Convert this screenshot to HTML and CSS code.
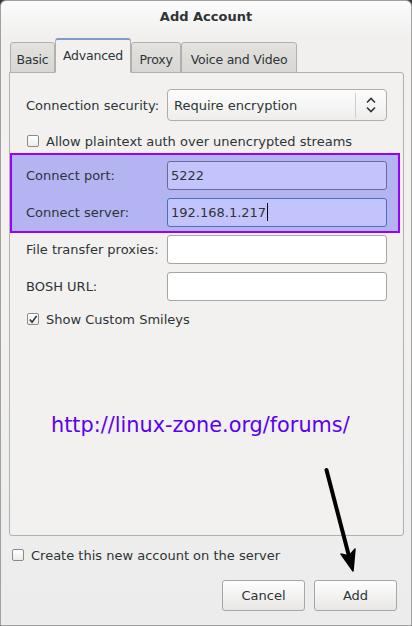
FILE: index.html
```html
<!DOCTYPE html>
<html>
<head>
<meta charset="utf-8">
<link rel="stylesheet" href="styles.css">
</head>
<body>
<div class="window">
  <div class="titlebar">Add Account</div>
  <div class="tabs">
    <div class="tab">Basic</div>
    <div class="tab active">Advanced</div>
    <div class="tab">Proxy</div>
    <div class="tab">Voice and Video</div>
  </div>
  <div class="panel">
    <div class="row row-select">
      <span class="label">Connection security:</span>
      <div class="select">
        <span class="select-text">Require encryption</span>
        <span class="select-sep"></span>
        <svg class="select-arrows" width="12" height="18" viewBox="0 0 12 18"><path d="M2 6.5 L6 2.5 L10 6.5 M2 11.5 L6 15.5 L10 11.5" fill="none" stroke="#2e3436" stroke-width="1.6"/></svg>
      </div>
    </div>
    <label class="check-row check-plain"><span class="checkbox"></span>Allow plaintext auth over unencrypted streams</label>
    <div class="highlight">
      <div class="row row-entry">
        <span class="label">Connect port:</span>
        <div class="entry entry-hl">5222</div>
      </div>
      <div class="row row-entry">
        <span class="label">Connect server:</span>
        <div class="entry entry-hl entry-focus">192.168.1.217<span class="caret"></span></div>
      </div>
    </div>
    <div class="row row-entry row-after">
      <span class="label">File transfer proxies:</span>
      <div class="entry"></div>
    </div>
    <div class="row row-entry">
      <span class="label">BOSH URL:</span>
      <div class="entry"></div>
    </div>
    <label class="check-row check-smileys"><span class="checkbox checked"><svg width="11" height="11" viewBox="0 0 11 11"><path d="M2 5.5 L4.5 8.5 L9.5 1.5" fill="none" stroke="#2e3436" stroke-width="1.8"/></svg></span>Show Custom Smileys</label>
    <div class="url">http://linux-zone.org/forums/</div>
  </div>
  <label class="check-row check-create"><span class="checkbox"></span>Create this new account on the server</label>
  <div class="buttons">
    <button class="btn">Cancel</button>
    <button class="btn">Add</button>
  </div>
  <svg class="arrow" width="412" height="626" viewBox="0 0 412 626">
    <line x1="326.5" y1="470" x2="350" y2="560" stroke="#000" stroke-width="4" stroke-linecap="round"/>
    <path d="M341 554 L353 571 L355 549 L349 556 Z" fill="#000" stroke="#000" stroke-width="1.5" stroke-linejoin="round"/>
  </svg>
</div>
</body>
</html>
```

FILE: styles.css
```css
html, body {
  margin: 0;
  padding: 0;
  background: #3a3a3a;
}
body {
  width: 412px;
  height: 626px;
  overflow: hidden;
  font-family: "DejaVu Sans", sans-serif;
  font-size: 13px;
  color: #2e3436;
}
.window {
  position: relative;
  box-sizing: border-box;
  width: 412px;
  height: 626px;
  border: 1px solid #a1a1a1;
  border-radius: 6px 6px 0 0;
  background: linear-gradient(#fbfbfb 0px, #f1f0ef 36px, #f2f1f0 300px, #ececec 626px);
  display: flex;
  flex-direction: column;
}
.titlebar {
  height: 31px;
  display: flex;
  align-items: center;
  justify-content: center;
  font-weight: bold;
  color: #2e3436;
}
.tabs {
  display: flex;
  align-items: flex-end;
  margin-left: 9px;
  height: 41px;
  position: relative;
  z-index: 1;
  margin-bottom: -1px;
}
.tab {
  box-sizing: border-box;
  height: 31px;
  padding: 9px 0 0 0;
  text-align: center;
  border: 1px solid #b2b0ad;
  border-radius: 3px 3px 0 0;
  background: linear-gradient(#e4e2df, #d8d6d2);
  color: #2e3436;
  font-size: 12.5px;
  letter-spacing: -0.2px;
  white-space: nowrap;
}
.tab:nth-child(1) { width: 45px; }
.tab:nth-child(2) { width: 76px; }
.tab:nth-child(3) { width: 50px; }
.tab:nth-child(4) { width: 116px; }
.tab.active {
  height: 35px;
  padding-top: 8px;
  background: #f2f1f0;
  border-top: 2px solid #7d9dc8;
  border-bottom: 1px solid #f2f1f0;
}
.panel {
  box-sizing: border-box;
  margin-left: 8px;
  width: 395px;
  height: 464px;
  border: 1px solid #b2b0ad;
  border-radius: 0 3px 3px 3px;
  background: #f2f1f0;
  padding-top: 16px;
  display: flex;
  flex-direction: column;
}
.row {
  display: flex;
  align-items: center;
  padding-left: 16px;
}
.label {
  width: 141px;
  flex: none;
}
.row-select {
  height: 32px;
}
.select {
  box-sizing: border-box;
  width: 220px;
  height: 32px;
  border: 1px solid #b0aea9;
  border-radius: 4px;
  background: linear-gradient(#fdfdfd, #eeedec);
  display: flex;
  align-items: center;
  padding-left: 6px;
}
.select-text {
  flex: 1;
}
.select-sep {
  width: 1px;
  height: 25px;
  background: #d0ceca;
  margin-right: 9px;
}
.select-arrows {
  margin-right: 9px;
}
.check-row {
  display: flex;
  align-items: center;
  gap: 7px;
}
.checkbox {
  box-sizing: border-box;
  width: 12px;
  height: 12px;
  border: 1px solid #8a8a87;
  border-radius: 2px;
  background: linear-gradient(#ffffff, #ececeb);
  flex: none;
  display: flex;
  align-items: center;
  justify-content: center;
}
.checkbox svg { display: block; }
.check-plain {
  padding-left: 17px;
  height: 16px;
  margin-top: 12px;
}
.highlight {
  box-sizing: border-box;
  margin-top: 4px;
  margin-right: 3px;
  height: 80px;
  border: 2px solid #9a00ff;
  background: #b4b4f2;
  padding-top: 6px;
  display: flex;
  flex-direction: column;
  gap: 9px;
}
.highlight .row {
  padding-left: 14px;
}
.row-entry {
  height: 28px;
}
.entry {
  box-sizing: border-box;
  width: 220px;
  height: 29px;
  border: 1px solid #a7a5a1;
  border-radius: 3px;
  background: #ffffff;
  display: flex;
  align-items: center;
  padding-left: 3px;
}
.entry-hl {
  background: #c4c4fd;
  border-color: #6a6a98;
}
.entry-focus {
  border-color: #4a6fc0;
}
.caret {
  display: inline-block;
  width: 1px;
  height: 18px;
  background: #000;
  margin-left: 1px;
}
.row-after {
  margin-top: 2px;
}
.row-after + .row {
  margin-top: 9px;
}
.check-smileys {
  padding-left: 17px;
  height: 16px;
  margin-top: 11px;
}
.url {
  margin-top: 86px;
  padding-left: 41px;
  font-size: 20.8px;
  color: #5a00f0;
}
.check-create {
  padding-left: 11px;
  margin-top: 11px;
  height: 16px;
}
.buttons {
  display: flex;
  justify-content: flex-end;
  gap: 9px;
  padding-right: 14px;
  margin-top: 17px;
}
.btn {
  box-sizing: border-box;
  width: 83px;
  height: 31px;
  border: 1px solid #a8a6a2;
  border-radius: 3px;
  background: linear-gradient(#fefefe, #e8e7e5);
  font-family: "DejaVu Sans", sans-serif;
  font-size: 13px;
  color: #2e3436;
  padding: 0;
}
.arrow {
  position: absolute;
  left: -1px;
  top: -1px;
  pointer-events: none;
}
```
